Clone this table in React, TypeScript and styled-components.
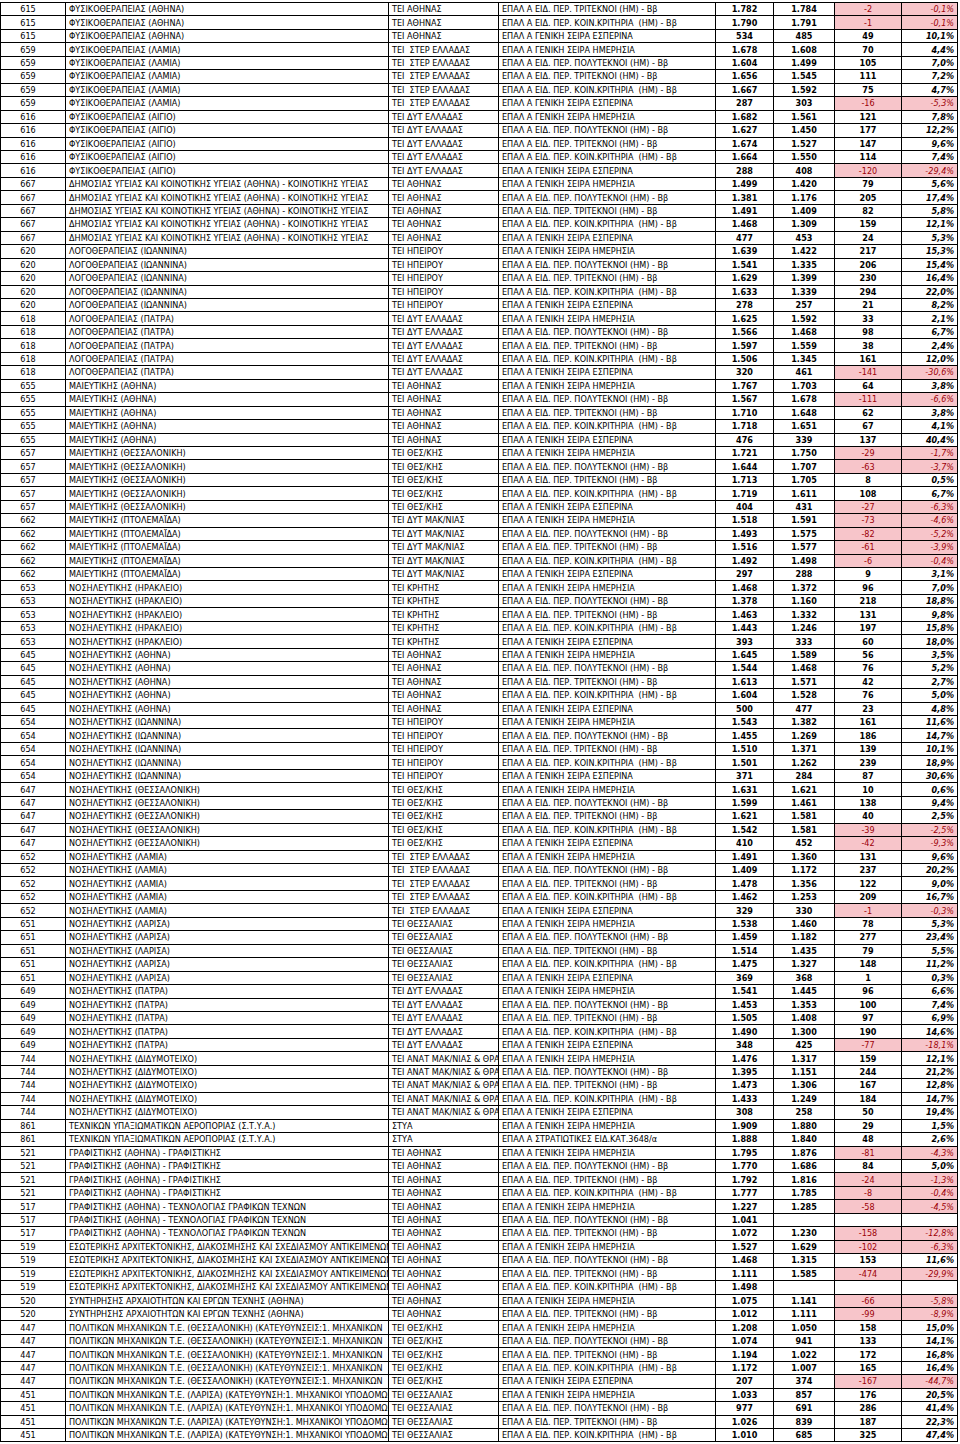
import React from "react";
import styled, { createGlobalStyle } from "styled-components";

const GlobalStyle = createGlobalStyle`
  body {
    margin: 0;
    background: #ffffff;
  }
`;

const TYPES: Record<string, string> = {
  H: "ΕΠΑΛ Α ΓΕΝΙΚΗ ΣΕΙΡΑ ΗΜΕΡΗΣΙΑ",
  P: "ΕΠΑΛ Α ΕΙΔ. ΠΕΡ. ΠΟΛΥΤΕΚΝΟΙ (ΗΜ) - Ββ",
  T: "ΕΠΑΛ Α ΕΙΔ. ΠΕΡ. ΤΡΙΤΕΚΝΟΙ (ΗΜ) - Ββ",
  K: "ΕΠΑΛ Α ΕΙΔ. ΠΕΡ. ΚΟΙΝ.ΚΡΙΤΗΡΙΑ  (ΗΜ) - Ββ",
  E: "ΕΠΑΛ Α ΓΕΝΙΚΗ ΣΕΙΡΑ ΕΣΠΕΡΙΝΑ",
  S: "ΕΠΑΛ Α ΣΤΡΑΤΙΩΤΙΚΕΣ ΕΙΔ.ΚΑΤ.3648/α",
};

type Group = {
  code: string;
  name: string;
  inst: string;
  rows: [string, number, number | null][];
};

const GROUPS: Group[] = [
  { code: "615", name: "ΦΥΣΙΚΟΘΕΡΑΠΕΙΑΣ (ΑΘΗΝΑ)", inst: "ΤΕΙ ΑΘΗΝΑΣ", rows: [["T", 1782, 1784], ["K", 1790, 1791], ["E", 534, 485]] },
  { code: "659", name: "ΦΥΣΙΚΟΘΕΡΑΠΕΙΑΣ (ΛΑΜΙΑ)", inst: "ΤΕΙ  ΣΤΕΡ ΕΛΛΑΔΑΣ", rows: [["H", 1678, 1608], ["P", 1604, 1499], ["T", 1656, 1545], ["K", 1667, 1592], ["E", 287, 303]] },
  { code: "616", name: "ΦΥΣΙΚΟΘΕΡΑΠΕΙΑΣ (ΑΙΓΙΟ)", inst: "ΤΕΙ ΔΥΤ ΕΛΛΑΔΑΣ", rows: [["H", 1682, 1561], ["P", 1627, 1450], ["T", 1674, 1527], ["K", 1664, 1550], ["E", 288, 408]] },
  { code: "667", name: "ΔΗΜΟΣΙΑΣ ΥΓΕΙΑΣ ΚΑΙ ΚΟΙΝΟΤΙΚΗΣ ΥΓΕΙΑΣ (ΑΘΗΝΑ) - ΚΟΙΝΟΤΙΚΗΣ ΥΓΕΙΑΣ", inst: "ΤΕΙ ΑΘΗΝΑΣ", rows: [["H", 1499, 1420], ["P", 1381, 1176], ["T", 1491, 1409], ["K", 1468, 1309], ["E", 477, 453]] },
  { code: "620", name: "ΛΟΓΟΘΕΡΑΠΕΙΑΣ (ΙΩΑΝΝΙΝΑ)", inst: "ΤΕΙ ΗΠΕΙΡΟΥ", rows: [["H", 1639, 1422], ["P", 1541, 1335], ["T", 1629, 1399], ["K", 1633, 1339], ["E", 278, 257]] },
  { code: "618", name: "ΛΟΓΟΘΕΡΑΠΕΙΑΣ (ΠΑΤΡΑ)", inst: "ΤΕΙ ΔΥΤ ΕΛΛΑΔΑΣ", rows: [["H", 1625, 1592], ["P", 1566, 1468], ["T", 1597, 1559], ["K", 1506, 1345], ["E", 320, 461]] },
  { code: "655", name: "ΜΑΙΕΥΤΙΚΗΣ (ΑΘΗΝΑ)", inst: "ΤΕΙ ΑΘΗΝΑΣ", rows: [["H", 1767, 1703], ["P", 1567, 1678], ["T", 1710, 1648], ["K", 1718, 1651], ["E", 476, 339]] },
  { code: "657", name: "ΜΑΙΕΥΤΙΚΗΣ (ΘΕΣΣΑΛΟΝΙΚΗ)", inst: "ΤΕΙ ΘΕΣ/ΚΗΣ", rows: [["H", 1721, 1750], ["P", 1644, 1707], ["T", 1713, 1705], ["K", 1719, 1611], ["E", 404, 431]] },
  { code: "662", name: "ΜΑΙΕΥΤΙΚΗΣ (ΠΤΟΛΕΜΑΪΔΑ)", inst: "ΤΕΙ ΔΥΤ ΜΑΚ/ΝΙΑΣ", rows: [["H", 1518, 1591], ["P", 1493, 1575], ["T", 1516, 1577], ["K", 1492, 1498], ["E", 297, 288]] },
  { code: "653", name: "ΝΟΣΗΛΕΥΤΙΚΗΣ (ΗΡΑΚΛΕΙΟ)", inst: "ΤΕΙ ΚΡΗΤΗΣ", rows: [["H", 1468, 1372], ["P", 1378, 1160], ["T", 1463, 1332], ["K", 1443, 1246], ["E", 393, 333]] },
  { code: "645", name: "ΝΟΣΗΛΕΥΤΙΚΗΣ (ΑΘΗΝΑ)", inst: "ΤΕΙ ΑΘΗΝΑΣ", rows: [["H", 1645, 1589], ["P", 1544, 1468], ["T", 1613, 1571], ["K", 1604, 1528], ["E", 500, 477]] },
  { code: "654", name: "ΝΟΣΗΛΕΥΤΙΚΗΣ (ΙΩΑΝΝΙΝΑ)", inst: "ΤΕΙ ΗΠΕΙΡΟΥ", rows: [["H", 1543, 1382], ["P", 1455, 1269], ["T", 1510, 1371], ["K", 1501, 1262], ["E", 371, 284]] },
  { code: "647", name: "ΝΟΣΗΛΕΥΤΙΚΗΣ (ΘΕΣΣΑΛΟΝΙΚΗ)", inst: "ΤΕΙ ΘΕΣ/ΚΗΣ", rows: [["H", 1631, 1621], ["P", 1599, 1461], ["T", 1621, 1581], ["K", 1542, 1581], ["E", 410, 452]] },
  { code: "652", name: "ΝΟΣΗΛΕΥΤΙΚΗΣ (ΛΑΜΙΑ)", inst: "ΤΕΙ  ΣΤΕΡ ΕΛΛΑΔΑΣ", rows: [["H", 1491, 1360], ["P", 1409, 1172], ["T", 1478, 1356], ["K", 1462, 1253], ["E", 329, 330]] },
  { code: "651", name: "ΝΟΣΗΛΕΥΤΙΚΗΣ (ΛΑΡΙΣΑ)", inst: "ΤΕΙ ΘΕΣΣΑΛΙΑΣ", rows: [["H", 1538, 1460], ["P", 1459, 1182], ["T", 1514, 1435], ["K", 1475, 1327], ["E", 369, 368]] },
  { code: "649", name: "ΝΟΣΗΛΕΥΤΙΚΗΣ (ΠΑΤΡΑ)", inst: "ΤΕΙ ΔΥΤ ΕΛΛΑΔΑΣ", rows: [["H", 1541, 1445], ["P", 1453, 1353], ["T", 1505, 1408], ["K", 1490, 1300], ["E", 348, 425]] },
  { code: "744", name: "ΝΟΣΗΛΕΥΤΙΚΗΣ (ΔΙΔΥΜΟΤΕΙΧΟ)", inst: "ΤΕΙ ΑΝΑΤ ΜΑΚ/ΝΙΑΣ & ΘΡΑΚΗΣ", rows: [["H", 1476, 1317], ["P", 1395, 1151], ["T", 1473, 1306], ["K", 1433, 1249], ["E", 308, 258]] },
  { code: "861", name: "ΤΕΧΝΙΚΩΝ ΥΠΑΞΙΩΜΑΤΙΚΩΝ ΑΕΡΟΠΟΡΙΑΣ (Σ.Τ.Υ.Α.)", inst: "ΣΤΥΑ", rows: [["H", 1909, 1880], ["S", 1888, 1840]] },
  { code: "521", name: "ΓΡΑΦΙΣΤΙΚΗΣ (ΑΘΗΝΑ) - ΓΡΑΦΙΣΤΙΚΗΣ", inst: "ΤΕΙ ΑΘΗΝΑΣ", rows: [["H", 1795, 1876], ["P", 1770, 1686], ["T", 1792, 1816], ["K", 1777, 1785]] },
  { code: "517", name: "ΓΡΑΦΙΣΤΙΚΗΣ (ΑΘΗΝΑ) - ΤΕΧΝΟΛΟΓΙΑΣ ΓΡΑΦΙΚΩΝ ΤΕΧΝΩΝ", inst: "ΤΕΙ ΑΘΗΝΑΣ", rows: [["H", 1227, 1285], ["P", 1041, null], ["T", 1072, 1230]] },
  { code: "519", name: "ΕΣΩΤΕΡΙΚΗΣ ΑΡΧΙΤΕΚΤΟΝΙΚΗΣ, ΔΙΑΚΟΣΜΗΣΗΣ ΚΑΙ ΣΧΕΔΙΑΣΜΟΥ ΑΝΤΙΚΕΙΜΕΝΩΝ", inst: "ΤΕΙ ΑΘΗΝΑΣ", rows: [["H", 1527, 1629], ["P", 1468, 1315], ["T", 1111, 1585], ["K", 1498, null]] },
  { code: "520", name: "ΣΥΝΤΗΡΗΣΗΣ ΑΡΧΑΙΟΤΗΤΩΝ ΚΑΙ ΕΡΓΩΝ ΤΕΧΝΗΣ (ΑΘΗΝΑ)", inst: "ΤΕΙ ΑΘΗΝΑΣ", rows: [["H", 1075, 1141], ["T", 1012, 1111]] },
  { code: "447", name: "ΠΟΛΙΤΙΚΩΝ ΜΗΧΑΝΙΚΩΝ Τ.Ε. (ΘΕΣΣΑΛΟΝΙΚΗ) (ΚΑΤΕΥΘΥΝΣΕΙΣ:1. ΜΗΧΑΝΙΚΩΝ", inst: "ΤΕΙ ΘΕΣ/ΚΗΣ", rows: [["H", 1208, 1050], ["P", 1074, 941], ["T", 1194, 1022], ["K", 1172, 1007], ["E", 207, 374]] },
  { code: "451", name: "ΠΟΛΙΤΙΚΩΝ ΜΗΧΑΝΙΚΩΝ Τ.Ε. (ΛΑΡΙΣΑ) (ΚΑΤΕΥΘΥΝΣΗ:1. ΜΗΧΑΝΙΚΟΙ ΥΠΟΔΟΜΩΝ", inst: "ΤΕΙ ΘΕΣΣΑΛΙΑΣ", rows: [["H", 1033, 857], ["P", 977, 691], ["T", 1026, 839], ["K", 1010, 685]] },
];

function fmt(n: number) {
  const abs = Math.abs(n);
  const s = abs >= 1000 ? `${Math.floor(abs / 1000)}.${String(abs % 1000).padStart(3, "0")}` : String(abs);
  return n < 0 ? `-${s}` : s;
}

function pct(diff: number, base: number) {
  const v = Math.round((diff / base) * 1000) / 10;
  return `${v.toFixed(1).replace(".", ",")}%`;
}

const Sheet = styled.div`
  width: 957px;
  margin-top: 2px;
  border-top: 1px solid #000;
  border-left: 1px solid #000;
  font-family: "Liberation Sans Narrow", "DejaVu Sans Condensed", "Liberation Sans", sans-serif;
  font-stretch: condensed;
  font-size: 9px;
  color: #000;
`;

const Row = styled.div`
  display: grid;
  grid-template-columns: 65px 323px 110px 217px 58px 61px 67px 56px;
  height: 13.46px;
  box-sizing: border-box;
  border-bottom: 1px solid #000;
`;

const Cell = styled.div<{ $align?: "left" | "center" | "right"; $bold?: boolean; $italic?: boolean; $neg?: boolean; $shift?: number }>`
  display: flex;
  align-items: center;
  justify-content: ${(p) => (p.$align === "center" ? "center" : p.$align === "right" ? "flex-end" : "flex-start")};
  padding-left: ${(p) => (p.$align === "left" ? "3px" : "0")};
  padding-right: ${(p) => (p.$align === "right" ? "3px" : `${p.$shift ?? 0}px`)};
  border-right: 1px solid #000;
  overflow: hidden;
  white-space: pre;
  line-height: 12px;
  font-weight: ${(p) => (p.$bold && !p.$neg ? 700 : 400)};
  font-style: ${(p) => (p.$italic ? "italic" : "normal")};
  background: ${(p) => (p.$neg ? "#f7c5ca" : "transparent")};
  color: ${(p) => (p.$neg ? "#9c0006" : "#000")};
`;

export default function App() {
  return (
    <>
      <GlobalStyle />
      <Sheet>
        {GROUPS.flatMap((g) =>
          g.rows.map(([t, a, b], i) => {
            const has = b !== null;
            const diff = has ? a - (b as number) : 0;
            const neg = has && diff < 0;
            return (
              <Row key={`${g.code}-${i}`}>
                <Cell $align="center" $shift={10}>{g.code}</Cell>
                <Cell $align="left">{g.name}</Cell>
                <Cell $align="left">{g.inst}</Cell>
                <Cell $align="left">{TYPES[t]}</Cell>
                <Cell $align="center" $bold>{fmt(a)}</Cell>
                <Cell $align="center" $bold>{has ? fmt(b as number) : ""}</Cell>
                <Cell $align="center" $bold $neg={neg}>{has ? fmt(diff) : ""}</Cell>
                <Cell $align="right" $bold $italic $neg={neg}>{has ? pct(diff, b as number) : ""}</Cell>
              </Row>
            );
          })
        )}
      </Sheet>
    </>
  );
}
